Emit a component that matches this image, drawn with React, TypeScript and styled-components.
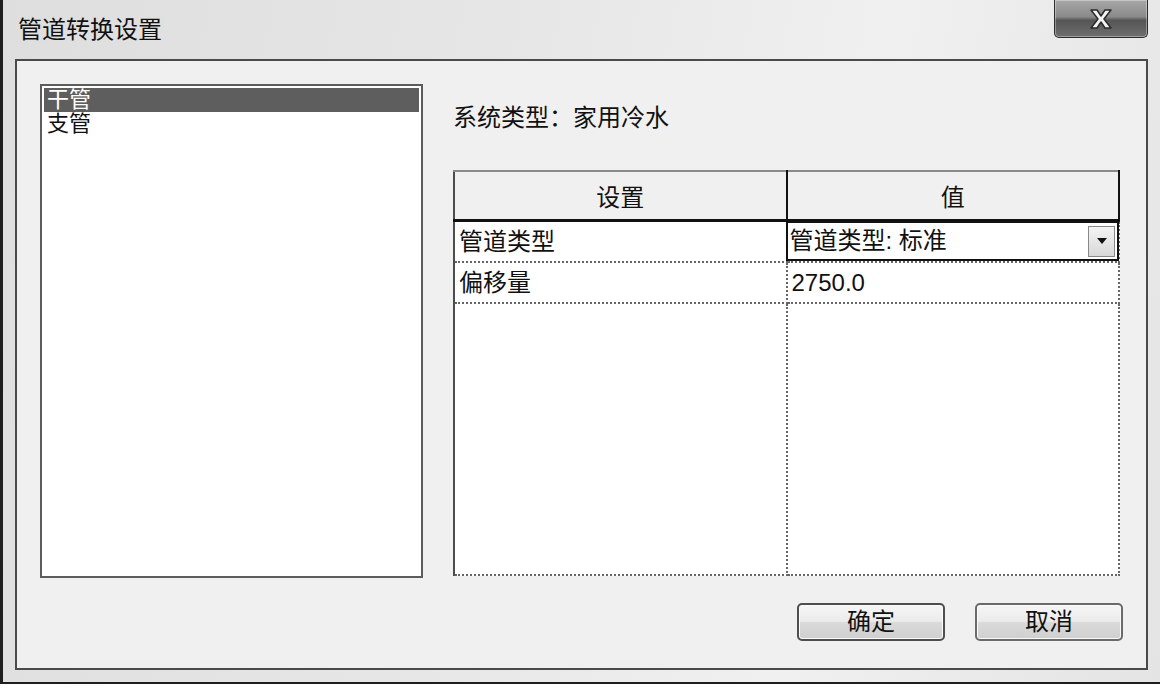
import React, { FC } from "react";
import styled, { createGlobalStyle } from "styled-components";

const GlobalStyle = createGlobalStyle`
  html, body {
    margin: 0;
    padding: 0;
    background: #ffffff;
  }
  body {
    font-family: "Liberation Sans", "Noto Sans CJK SC", sans-serif;
    color: #111;
  }
`;

const FONT = `"Liberation Sans", "Noto Sans CJK SC", sans-serif`;

const rows = [
  { name: "管道类型", value: "管道类型: 标准", combo: true },
  { name: "偏移量", value: "2750.0", combo: false },
];

const App: FC = () => {
  return (
    <>
      <GlobalStyle />
      <Window>
        <TitleBar>
          <Title>管道转换设置</Title>
          <CloseButton>
            <svg width="36" height="26" viewBox="0 0 36 26">
              <path
                d="M8 4 L14 4 L18 10 L22 4 L28 4 L21 13 L28 22 L22 22 L18 16 L14 22 L8 22 L15 13 Z"
                fill="#f4f4f4"
                stroke="#2a2a2a"
                strokeWidth="1.5"
                strokeLinejoin="round"
              />
            </svg>
          </CloseButton>
        </TitleBar>
        <Client>
          <ListBox>
            <ListItem $selected>干管</ListItem>
            <ListItem>支管</ListItem>
          </ListBox>
          <RightPane>
            <SystemLabel>系统类型：家用冷水</SystemLabel>
            <Grid>
              <thead>
                <tr>
                  <HeadCell>设置</HeadCell>
                  <HeadCell>值</HeadCell>
                </tr>
              </thead>
              <tbody>
                {rows.map((r) => (
                  <tr key={r.name}>
                    <Cell>{r.name}</Cell>
                    <Cell $value>
                      {r.combo ? (
                        <Combo>
                          <span>{r.value}</span>
                          <DropButton>
                            <svg width="12" height="8" viewBox="0 0 12 8">
                              <path d="M1 1 L11 1 L6 7 Z" fill="#111" />
                            </svg>
                          </DropButton>
                        </Combo>
                      ) : (
                        r.value
                      )}
                    </Cell>
                  </tr>
                ))}
                <FillerRow>
                  <Cell />
                  <Cell $value />
                </FillerRow>
              </tbody>
            </Grid>
            <ButtonRow>
              <DialogButton $default>确定</DialogButton>
              <DialogButton>取消</DialogButton>
            </ButtonRow>
          </RightPane>
        </Client>
      </Window>
    </>
  );
};

export default App;

const Window = styled.div`
  width: 1160px;
  height: 684px;
  box-sizing: border-box;
  border-left: 3px solid #1e1e1e;
  border-bottom: 2px solid #1e1e1e;
  background: linear-gradient(
    100deg,
    #dedede 0%,
    #e6e6e6 40%,
    #f0f0f0 70%,
    #e4e4e4 100%
  );
  display: flex;
  flex-direction: column;
  font-family: ${FONT};
`;

const TitleBar = styled.div`
  height: 59px;
  display: flex;
  justify-content: space-between;
  align-items: flex-start;
  padding-left: 15px;
`;

const Title = styled.div`
  margin-top: 16px;
  font-size: 24px;
  line-height: 28px;
  color: #111;
`;

const CloseButton = styled.div`
  width: 94px;
  height: 38px;
  margin-right: 12px;
  box-sizing: border-box;
  border: 1px solid #2c2c2c;
  border-top: none;
  border-radius: 0 0 5px 5px;
  background: linear-gradient(
    180deg,
    #a8a8a8 0%,
    #8a8a8a 45%,
    #555 55%,
    #6e6e6e 100%
  );
  box-shadow: inset 0 0 0 1px rgba(255, 255, 255, 0.35);
  display: flex;
  align-items: center;
  justify-content: center;
`;

const Client = styled.div`
  margin: 0 12px 0 12px;
  height: 611px;
  box-sizing: border-box;
  border: 2px solid #4a4a4a;
  background: #f0f0f0;
  display: flex;
  gap: 30px;
  padding: 23px 22px 0 23px;
`;

const ListBox = styled.div`
  width: 383px;
  height: 494px;
  box-sizing: border-box;
  border: 2px solid #5c5c5c;
  background: #fff;
  padding: 2px 2px;
`;

const ListItem = styled.div<{ $selected?: boolean }>`
  height: 24px;
  line-height: 24px;
  font-size: 22px;
  padding-left: 3px;
  white-space: nowrap;
  background: ${({ $selected }) => ($selected ? "#5e5e5e" : "transparent")};
  color: ${({ $selected }) => ($selected ? "#fff" : "#111")};
`;

const RightPane = styled.div`
  width: 669px;
  display: flex;
  flex-direction: column;
`;

const SystemLabel = styled.div`
  margin-top: 19px;
  height: 30px;
  font-size: 24px;
  line-height: 30px;
`;

const Grid = styled.table`
  margin-top: 37px;
  width: 667px;
  height: 406px;
  border-collapse: collapse;
  table-layout: fixed;
  border-top: 2px solid #8a8a8a;
  border-left: 2px solid #4c4c4c;
  background: #fff;
`;

const HeadCell = styled.th`
  height: 47px;
  padding: 0;
  font-weight: normal;
  font-size: 24px;
  background: #f0f0f0;
  border-right: 2px solid #111;
  border-bottom: 3px solid #111;
  text-align: center;
`;

const Cell = styled.td<{ $value?: boolean }>`
  height: 39px;
  padding: 0 4px;
  font-size: 24px;
  line-height: 30px;
  vertical-align: middle;
  border-bottom: 2px dotted #666;
  border-right: 2px dotted #666;
  white-space: nowrap;
  position: relative;
`;

const FillerRow = styled.tr`
  td {
    height: auto;
  }
`;

const Combo = styled.div`
  position: absolute;
  inset: -1px -1px 0 -2px;
  box-sizing: border-box;
  border: 2px solid #111;
  background: #fff;
  display: flex;
  align-items: center;
  justify-content: space-between;
  padding-left: 2px;
  padding-right: 2px;
`;

const DropButton = styled.div`
  width: 27px;
  height: 31px;
  box-sizing: border-box;
  border: 1px solid #888;
  background: linear-gradient(180deg, #f4f4f4 0%, #d8d8d8 100%);
  display: flex;
  align-items: center;
  justify-content: center;
`;

const ButtonRow = styled.div`
  margin-top: 27px;
  display: flex;
  justify-content: flex-end;
  gap: 30px;
  margin-right: -1px;
`;

const DialogButton = styled.div<{ $default?: boolean }>`
  width: 148px;
  height: 38px;
  box-sizing: border-box;
  border: 2px solid ${({ $default }) => ($default ? "#4e4e4e" : "#6a6a6a")};
  border-radius: 5px;
  background: linear-gradient(
    180deg,
    #f6f6f6 0%,
    #ebebeb 48%,
    #dadada 52%,
    #cfcfcf 100%
  );
  box-shadow: inset 0 0 0 1px #fafafa;
  font-size: 24px;
  line-height: 34px;
  text-align: center;
  color: #111;
`;
